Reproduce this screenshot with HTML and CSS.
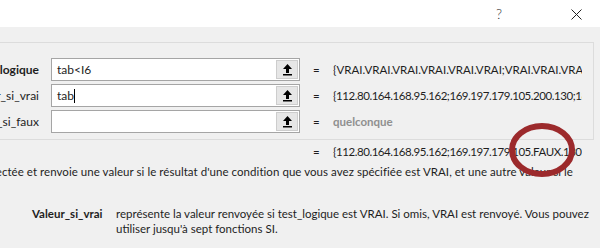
FILE: index.html
```html
<!DOCTYPE html>
<html lang="fr">
  <head>
    <meta charset="UTF-8" />
    <title>Arguments de la fonction</title>
    <link rel="stylesheet" href="styles.css">
  </head>
  <body>
    <div class="titlebar">
      <span class="help">?</span>
      <svg class="close" width="11" height="11" viewBox="0 0 11 11">
        <path d="M0.5 0.5 L10.5 10.5 M10.5 0.5 L0.5 10.5" stroke="#222" stroke-width="1" fill="none" />
      </svg>
    </div>

    <div class="content">
      <div class="group">
        <div class="arg-row">
          <div class="arg-name"><span class="req">Test_logique</span></div>
          <div class="field">
            <span class="field-text">tab&lt;I6</span>
            <span class="pick">
              <svg width="11" height="13" viewBox="0 0 11 13"><path d="M5.5 1 L10 6 H7 V10 H4 V6 H1 Z M1 11 H10 V12.5 H1 Z" fill="#000" /></svg>
            </span>
          </div>
          <div class="eq">=</div>
          <div class="value">{VRAI.VRAI.VRAI.VRAI.VRAI.VRAI;VRAI.VRAI.VRAI.VRAI.VRAI.VRAI}</div>
        </div>
        <div class="arg-row">
          <div class="arg-name"><span>Valeur_si_vrai</span></div>
          <div class="field">
            <span class="field-text">tab<span class="caret"></span></span>
            <span class="pick">
              <svg width="11" height="13" viewBox="0 0 11 13"><path d="M5.5 1 L10 6 H7 V10 H4 V6 H1 Z M1 11 H10 V12.5 H1 Z" fill="#000" /></svg>
            </span>
          </div>
          <div class="eq">=</div>
          <div class="value num">{112.80.164.168.95.162;169.197.179.105.200.130;18.45.98.112.64.77}</div>
        </div>
        <div class="arg-row">
          <div class="arg-name"><span>Valeur_si_faux</span></div>
          <div class="field">
            <span class="field-text"></span>
            <span class="pick">
              <svg width="11" height="13" viewBox="0 0 11 13"><path d="M5.5 1 L10 6 H7 V10 H4 V6 H1 Z M1 11 H10 V12.5 H1 Z" fill="#000" /></svg>
            </span>
          </div>
          <div class="eq">=</div>
          <div class="value any">quelconque</div>
        </div>
      </div>

      <div class="result-row">
        <div class="eq">=</div>
        <div class="value num">{112.80.164.168.95.162;169.197.179.105.FAUX.130;</div>
      </div>

      <div class="summary">
        <span>Vérifie si la condition est respectée et renvoie une valeur si le résultat d'une condition que vous avez spécifiée est VRAI, et une autre valeur si le</span>
      </div>

      <div class="help-arg">
        <div class="help-name">Valeur_si_vrai</div>
        <div class="help-text">représente la valeur renvoyée si test_logique est VRAI. Si omis, VRAI est renvoyé. Vous pouvez<br>utiliser jusqu'à sept fonctions SI.</div>
      </div>
    </div>

    <svg class="mark" width="80" height="64" viewBox="0 0 80 64">
      <ellipse cx="40" cy="32" rx="30" ry="24" fill="none" stroke="#9c2a2c" stroke-width="6" />
    </svg>
  </body>
</html>
```

FILE: styles.css
```css
body {
  margin: 0;
  width: 600px;
  height: 248px;
  overflow: hidden;
  position: relative;
  background-color: #f0f0f0;
  font-family: "Lato", "Open Sans", sans-serif;
  font-size: 11.5px;
  color: #1e1e1e;
}

.titlebar {
  height: 27px;
  background-color: #ffffff;
  display: flex;
  align-items: center;
  justify-content: flex-end;
  padding-right: 18px;
  gap: 69px;
}

.help {
  font-size: 14px;
  color: #333;
  font-weight: 300;
}

.close {
  margin-top: 1px;
}

.content {
  padding-top: 15px;
}

.group {
  margin-left: -60px;
  width: 652px;
  border: 1px solid #dcdcdc;
  padding: 15px 0 6px;
  display: flex;
  flex-direction: column;
  gap: 3px;
}

.arg-row {
  display: grid;
  grid-template-columns: 110px 249px 33px 249px;
  align-items: center;
  height: 23px;
}

.arg-name {
  display: flex;
  justify-content: flex-end;
  white-space: nowrap;
  padding-right: 12px;
  font-size: 12px;
}

.req {
  font-weight: 700;
}

.field {
  width: 249px;
  height: 23px;
  box-sizing: border-box;
  border: 1px solid #a5a5a5;
  background-color: #ffffff;
  display: flex;
}

.field-text {
  flex: 1;
  padding-left: 5px;
  line-height: 21px;
  font-size: 12px;
}

.caret {
  display: inline-block;
  width: 1px;
  height: 14px;
  background-color: #000;
  vertical-align: -3px;
}

.pick {
  width: 20px;
  margin: 1px;
  border: 1px solid #cdcdcd;
  background-color: #e6e6e6;
  display: flex;
  align-items: center;
  justify-content: center;
}

.eq {
  padding-left: 13px;
}

.value {
  white-space: nowrap;
  overflow: hidden;
}

.num {
  letter-spacing: -0.45px;
}

.any {
  color: #8f8f8f;
  font-weight: 700;
}

.result-row {
  display: grid;
  grid-template-columns: 33px 249px;
  align-items: center;
  height: 15px;
  margin-top: 4px;
  padding-left: 300px;
}

.summary {
  width: 573px;
  margin-top: 5px;
  display: flex;
  justify-content: flex-end;
  white-space: nowrap;
  line-height: 15px;
  letter-spacing: 0.05px;
}

.help-arg {
  display: flex;
  margin-top: 27px;
  line-height: 15px;
}

.help-name {
  flex-shrink: 0;
  width: 84px;
  padding-left: 32px;
  font-weight: 700;
}

.help-text {
  white-space: nowrap;
}

.mark {
  position: absolute;
  left: 502px;
  top: 118px;
}
```
